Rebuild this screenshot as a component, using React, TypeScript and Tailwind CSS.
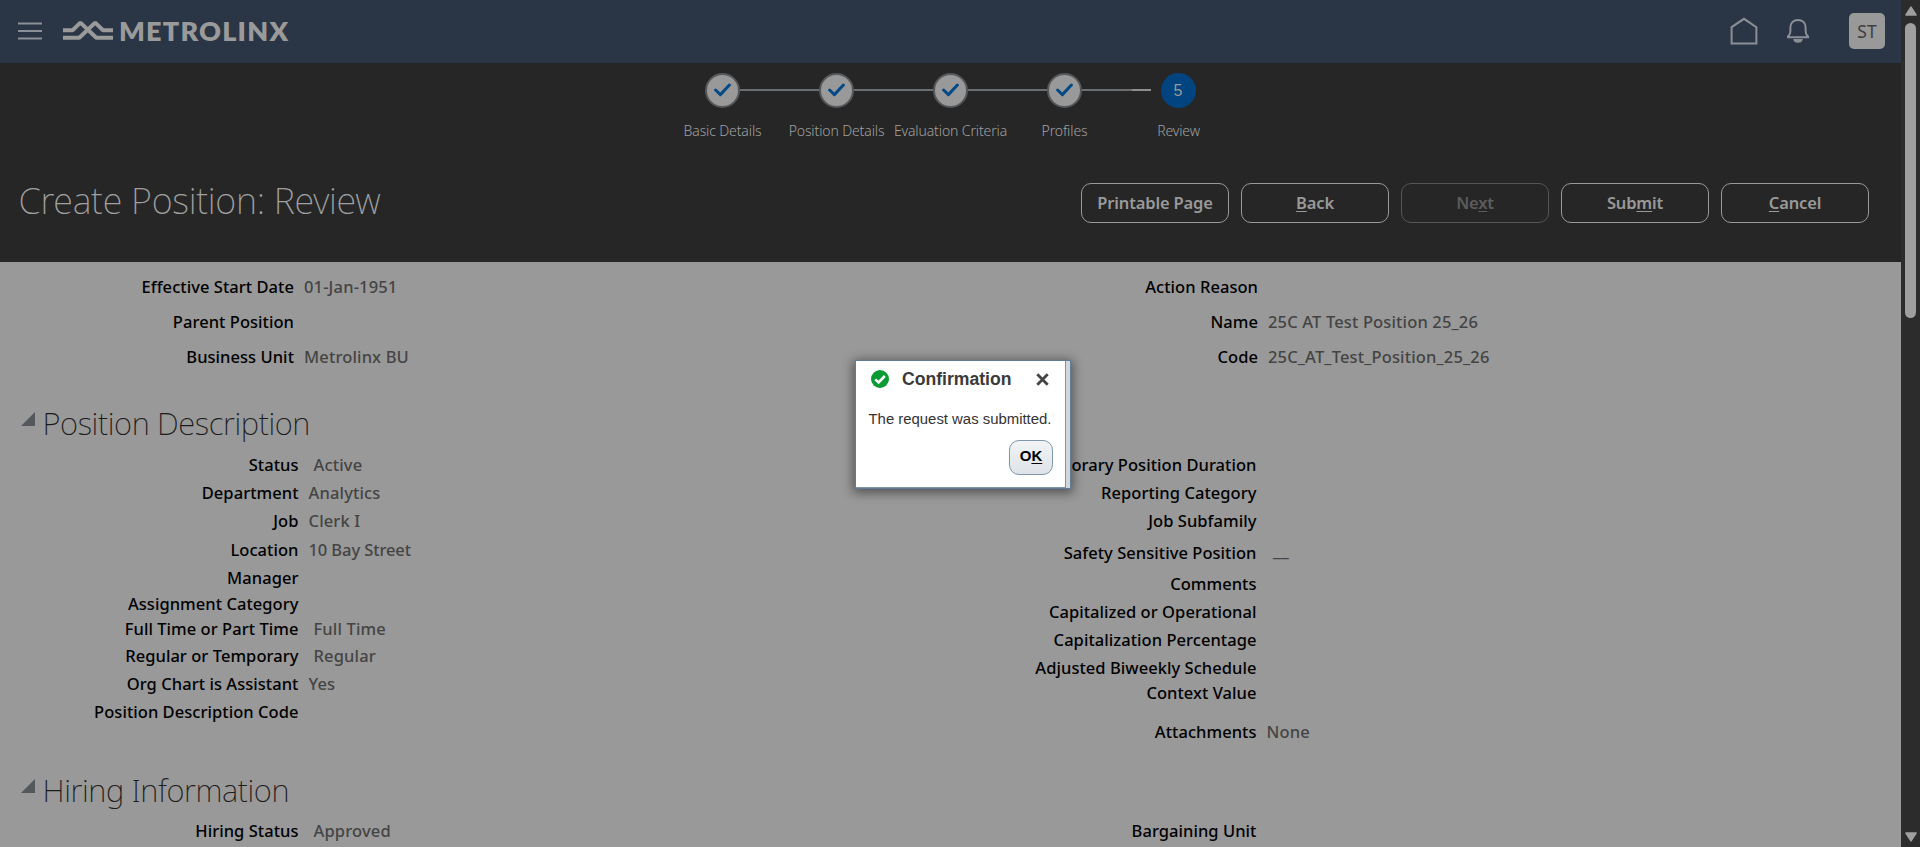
import type { ReactNode } from "react";

type Field = { label: string; value?: ReactNode; gap: string; indent?: string };

const summaryLeft: Field[] = [
  { label: "Effective Start Date", value: "01-Jan-1951", gap: "mt-[15px]" },
  { label: "Parent Position", gap: "mt-[15px]" },
  { label: "Business Unit", value: "Metrolinx BU", gap: "mt-[15px]" },
];

const summaryRight: Field[] = [
  { label: "Action Reason", gap: "mt-[15px]" },
  { label: "Name", value: "25C AT Test Position 25_26", gap: "mt-[15px]" },
  { label: "Code", value: "25C_AT_Test_Position_25_26", gap: "mt-[15px]" },
];

const descriptionLeft: Field[] = [
  { label: "Status", value: "Active", gap: "mt-0", indent: "pl-[15px]" },
  { label: "Department", value: "Analytics", gap: "mt-2" },
  { label: "Job", value: "Clerk I", gap: "mt-2" },
  { label: "Location", value: <span className="tracking-[-0.1px]">10 Bay Street</span>, gap: "mt-[9px]" },
  { label: "Manager", gap: "mt-2" },
  { label: "Assignment Category", gap: "mt-1.5" },
  { label: "Full Time or Part Time", value: "Full Time", gap: "mt-[5px]", indent: "pl-[15px]" },
  { label: "Regular or Temporary", value: "Regular", gap: "mt-[7px]", indent: "pl-[15px]" },
  { label: "Org Chart is Assistant", value: "Yes", gap: "mt-2" },
  { label: "Position Description Code", gap: "mt-2" },
];

const descriptionRight: Field[] = [
  { label: "Temporary Position Duration", gap: "mt-0" },
  { label: "Reporting Category", gap: "mt-2" },
  { label: "Job Subfamily", gap: "mt-2" },
  {
    label: "Safety Sensitive Position",
    value: <span className="block -translate-y-[4px] text-[18px]">__</span>,
    gap: "mt-3",
    indent: "pl-[16.5px]",
  },
  { label: "Comments", gap: "mt-[11px]" },
  { label: "Capitalized or Operational", gap: "mt-2" },
  { label: "Capitalization Percentage", gap: "mt-2" },
  { label: "Adjusted Biweekly Schedule", gap: "mt-2" },
  { label: "Context Value", gap: "mt-[5px]" },
  { label: "Attachments", value: "None", gap: "mt-[19px]" },
];

const hiringLeft: Field[] = [{ label: "Hiring Status", value: "Approved", gap: "mt-0", indent: "pl-[15px]" }];
const hiringRight: Field[] = [{ label: "Bargaining Unit", gap: "mt-0" }];

function FieldColumn({ fields, labelWidth, className = "" }: { fields: Field[]; labelWidth: string; className?: string }) {
  return (
    <div className={className}>
      {fields.map((f) => (
        <div key={f.label} className={`flex h-5 text-[16.5px] leading-5 font-medium whitespace-nowrap ${f.gap}`}>
          <span className={`${labelWidth} shrink-0 text-right tracking-[0.05px] text-black`}>{f.label}</span>
          <span className={`${f.indent ?? "pl-[10px]"} tracking-[0.15px] text-[#444444]`}>{f.value}</span>
        </div>
      ))}
    </div>
  );
}

function SectionTitle({ children, className = "" }: { children: ReactNode; className?: string }) {
  return (
    <div className={`flex h-10 items-start pl-[21px] ${className}`}>
      <svg width="14" height="14" viewBox="0 0 14 14" className="mt-[9px] shrink-0">
        <path d="M14 0V14H0Z" fill="#54585c" />
      </svg>
      <h2 className="ml-[7.5px] text-[31px] leading-10 font-[240] tracking-[-0.4px] text-[#1c1c1c]">{children}</h2>
    </div>
  );
}

const steps = ["Basic Details", "Position Details", "Evaluation Criteria", "Profiles", "Review"];

function Train() {
  const last = steps.length - 1;
  return (
    <ol className="flex pl-[665px]">
      {steps.map((s, i) => (
        <li key={s} className="flex w-[114px] flex-col items-center">
          <div className="flex w-full items-center">
            <span className="flex h-[2px] flex-1">
              {i > 0 && i < last && <span className="flex-1 bg-[#6a6e71]" />}
              {i === last && (
                <>
                  <span className="w-[11px] bg-[#6a6e71]" />
                  <span className="w-[19px] bg-[#8f8f8f]" />
                </>
              )}
            </span>
            {i < last ? (
              <span className="flex size-[35px] items-center justify-center rounded-full border-2 border-[#55585b] bg-[#999999]">
                <svg width="17" height="14" viewBox="0 0 17 14" fill="none">
                  <path d="M1.6 7L6.4 11.6L15.4 2" stroke="#024a86" strokeWidth="3" strokeLinecap="round" strokeLinejoin="round" />
                </svg>
              </span>
            ) : (
              <span className="flex size-[35px] items-center justify-center rounded-full bg-[#02447f] pt-px font-['Liberation_Sans',sans-serif] text-[16px] text-[#999999]">
                5
              </span>
            )}
            <span className={`h-[2px] flex-1 ${i === last ? "" : "bg-[#6a6e71]"}`} />
          </div>
          <span className="mt-[13px] pl-px text-[14px] leading-5 font-light tracking-[-0.12px] whitespace-nowrap text-[#a0a0a0]">
            {s}
          </span>
        </li>
      ))}
    </ol>
  );
}

function ActionButton({ children, disabled = false }: { children: ReactNode; disabled?: boolean }) {
  return (
    <button
      className={`h-10 w-[148px] rounded-[10px] border pt-[2px] text-[16.5px] font-semibold tracking-[-0.16px] whitespace-nowrap ${
        disabled ? "border-[#555555] text-[#5c5c5c]" : "border-[#999999] text-[#999999]"
      }`}
    >
      {children}
    </button>
  );
}

function Key({ children }: { children: ReactNode }) {
  return <span className="underline decoration-1 underline-offset-2">{children}</span>;
}

function Header() {
  return (
    <header className="flex h-[63px] items-center bg-[#2a3545] pr-4 pb-px pl-[18px]">
      <svg width="24" height="18" viewBox="0 0 24 18" className="shrink-0">
        <path d="M0 1.5H24M0 9H24M0 16.5H24" stroke="#8b9096" strokeWidth="2" />
      </svg>
      <svg width="50" height="22" viewBox="0 0 50 22" fill="none" strokeLinejoin="bevel" className="ml-[21px] shrink-0">
        <path d="M0 10.2H9.6L17.4 2.6L33.3 17.8H50" stroke="#9a9a9a" strokeWidth="4" />
        <path d="M0 17.8H16.3L32.2 2.6L40 10.2H50" stroke="#9a9a9a" strokeWidth="4" />
      </svg>
      <span className="-mt-[2px] ml-[6px] font-['Lato',sans-serif] text-[27px] leading-none font-extrabold tracking-[1.2px] text-[#9a9a9a]">
        METROLINX
      </span>
      <div className="ml-auto flex items-center">
        <svg width="28" height="28" viewBox="0 0 28 28" fill="none">
          <path d="M1.6 10.2L14 1.8L26.4 10.2V26.4H1.6Z" stroke="#8b9096" strokeWidth="2" />
        </svg>
        <svg width="24" height="26" viewBox="0 0 24 26" fill="none" className="ml-[28px]">
          <path
            d="M2 19.2V18.4C4 17 4.4 15.5 4.4 12V9.6C4.4 5 7.6 2 12 2C16.4 2 19.6 5 19.6 9.6V12C19.6 15.5 20 17 22 18.4V19.2Z"
            stroke="#8b9096"
            strokeWidth="2"
          />
          <path d="M8.5 22C9.2 24.4 14.8 24.4 15.5 22Z" stroke="#8b9096" strokeWidth="2" />
        </svg>
        <span className="ml-[39px] flex size-9 items-center justify-center rounded-[5px] bg-[#999999] text-[17.5px] text-[#3f3f3f]">ST</span>
      </div>
    </header>
  );
}

function Scrollbar() {
  return (
    <div className="flex w-[19px] shrink-0 flex-col items-center bg-[#2c2c2c] pt-[6px] pb-[5px]">
      <svg width="12" height="10" viewBox="0 0 12 10" className="shrink-0">
        <path d="M6 1.2L11 9H1Z" fill="#9f9f9f" stroke="#9f9f9f" strokeLinejoin="round" strokeWidth="1.6" />
      </svg>
      <div className="mt-[7px] h-[295px] w-[11px] rounded-full bg-[#9f9f9f]" />
      <svg width="12" height="10" viewBox="0 0 12 10" className="mt-auto shrink-0">
        <path d="M6 8.8L11 1H1Z" fill="#9f9f9f" stroke="#9f9f9f" strokeLinejoin="round" strokeWidth="1.6" />
      </svg>
    </div>
  );
}

function ConfirmationDialog() {
  return (
    <div
      role="dialog"
      className="absolute top-[360px] left-[855px] flex h-[129px] w-[216px] border border-[#5f7d98] bg-linear-to-r from-[#b9bcbe] to-[#d4d6d8] font-['Liberation_Sans',Arial,sans-serif] shadow-[0_2px_10px_2px_rgba(0,0,0,0.45)]"
    >
      <div className="flex w-[210px] flex-col border-r border-b border-[#7d94a8] bg-white">
        <div className="flex h-9 items-center pl-[15px]">
          <svg width="18" height="18" viewBox="0 0 18 18" fill="none">
            <circle cx="9" cy="9" r="9" fill="#0a9b35" />
            <path d="M4.2 9.4L7.6 12.4L13.8 6" stroke="#fff" strokeWidth="2.6" />
          </svg>
          <h3 className="ml-[13px] text-[17.6px] leading-5 font-bold text-[#3a3a3a]">Confirmation</h3>
          <svg width="13" height="13" viewBox="0 0 12 12" className="ml-[25px]">
            <path d="M1.2 1.2L10.8 10.8M10.8 1.2L1.2 10.8" stroke="#444444" strokeWidth="2.6" />
          </svg>
        </div>
        <p className="mt-[12px] pl-[12.5px] text-[14.9px] leading-5 whitespace-nowrap text-[#333333]">The request was submitted.</p>
        <button className="mt-[11px] mr-3 h-[35px] w-[44px] self-end rounded-[10px] border border-[#7e98ae] bg-linear-to-b from-[#f2f4f5] to-[#dfe3e7] pb-[2px] text-[15px] font-bold text-black">
          O<Key>K</Key>
        </button>
      </div>
    </div>
  );
}

export default function App() {
  return (
    <div className="relative flex h-[847px] w-[1920px] overflow-hidden bg-[#999999] font-['Noto_Sans',sans-serif]">
      <div className="min-w-0 flex-1">
        <Header />
        <div className="h-[199px] bg-[#262626] pt-[9.5px]">
          <Train />
          <div className="mt-[42px] flex items-start justify-between pr-8 pl-[18.5px]">
            <h1 className="-mt-[6px] text-[36px] leading-[48px] font-[240] tracking-[-0.27px] text-[#a0a0a0]">
              Create Position: Review
            </h1>
            <div className="flex gap-3">
              <ActionButton>Printable Page</ActionButton>
              <ActionButton>
                <Key>B</Key>ack
              </ActionButton>
              <ActionButton disabled>
                Ne<Key>x</Key>t
              </ActionButton>
              <ActionButton>
                Sub<Key>m</Key>it
              </ActionButton>
              <ActionButton>
                <Key>C</Key>ancel
              </ActionButton>
            </div>
          </div>
        </div>
        <main>
          <div className="flex">
            <FieldColumn fields={summaryLeft} labelWidth="w-[294px]" className="w-[950px]" />
            <FieldColumn fields={summaryRight} labelWidth="w-[308px]" />
          </div>
          <SectionTitle className="mt-[36px]">Position Description</SectionTitle>
          <div className="mt-3 flex">
            <FieldColumn fields={descriptionLeft} labelWidth="w-[298.5px]" className="w-[950px]" />
            <FieldColumn fields={descriptionRight} labelWidth="w-[306.5px]" />
          </div>
          <SectionTitle className="mt-[28px]">Hiring Information</SectionTitle>
          <div className="mt-[11px] flex">
            <FieldColumn fields={hiringLeft} labelWidth="w-[298.5px]" className="w-[950px]" />
            <FieldColumn fields={hiringRight} labelWidth="w-[306.5px]" />
          </div>
        </main>
      </div>
      <Scrollbar />
      <ConfirmationDialog />
    </div>
  );
}
